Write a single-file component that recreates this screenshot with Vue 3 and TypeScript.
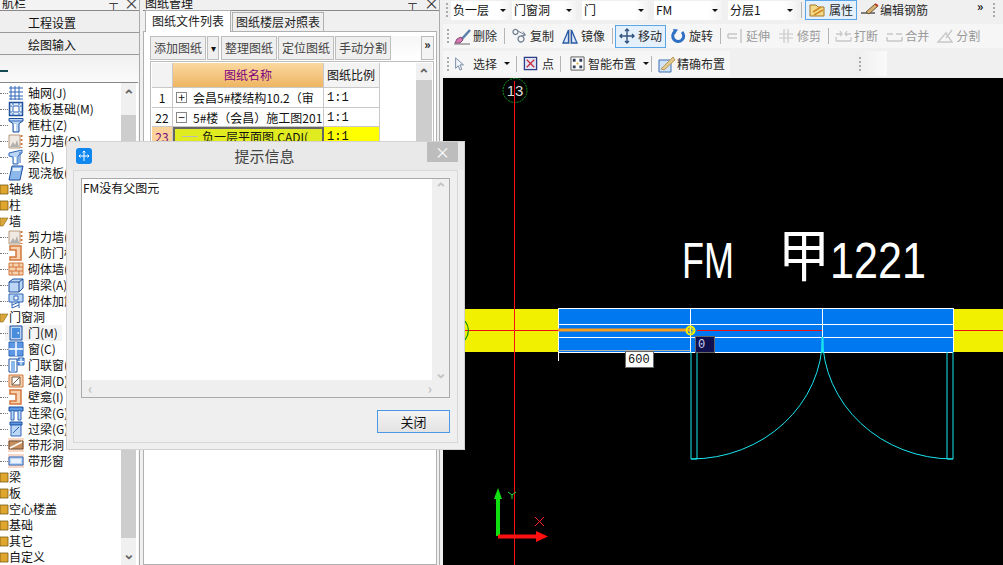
<script setup lang="ts">
import { h } from 'vue'

type Part = { d: string; s?: string; f?: string; w?: number; o?: number }
const B = '#2f66b8'
const LB = '#bcd6f5'
const O = '#d2763a'
const LO = '#f7d2b0'

const icons: Record<string, Part[]> = {
  grid: [{ d: 'M1 3H15M1 7H15M1 11H15M1 14H15M3 1V15M7 1V15M11 1V15', s: B }],
  raft: [
    { d: 'M1.5 1.5H14.5V14.5H1.5Z', s: '#1d4f9c', f: '#e8f0fb', w: 1.5 },
    { d: 'M5 5H11V11H5Z', s: B, f: '#fff' },
    { d: 'M1 5H4M1 11H4M12 5H15M12 11H15M5 1V4M11 1V4M5 12V15M11 12V15', s: B }
  ],
  col: [
    { d: 'M1 1.5H15V4L11 6.5V15H5V6.5L1 4Z', s: '#1d4f9c', f: LB },
    { d: 'M1 4H15', s: B },
    { d: 'M7 7V14', s: '#fff', w: 2 }
  ],
  shear: [
    { d: 'M1 2H12V15H1Z', s: '#b59a7c', f: '#efe9e2' },
    { d: 'M2 14L5 9L7 12L9 7L11 14Z', f: '#9c9c9c', o: 0.75 },
    { d: 'M13.5 2V4M13.5 6V8M13.5 10V12M13.5 14V15', s: O, w: 2 }
  ],
  beam: [
    { d: 'M1 4L14 1V4L10 7V15H5V8L1 7Z', s: B, f: LB },
    { d: 'M7 8V14', s: '#fff', w: 2 },
    { d: 'M12 3V14', s: B }
  ],
  slab: [{ d: 'M4 1H15L12 15H1Z', s: '#1d4f9c', f: '#8db8ec' }, { d: 'M5 3H13L12 6H4.5Z', f: '#e3effc' }],
  rf: [{ d: 'M2 1H13V15H2V12H8V5H2Z', s: O, f: LO, w: 1.5 }],
  brick: [
    { d: 'M1 2H15V14H1Z', s: O, f: LO },
    { d: 'M1 6H15M1 10H15M5 2V6M11 2V6M8 6V10M4 10V14M11 10V14', s: O }
  ],
  hidden: [
    { d: 'M1 5L5 2H15V11L11 15H1Z', s: '#1d4f9c', f: LB },
    { d: 'M1 5H11V15M11 5L15 2', s: '#1d4f9c' }
  ],
  rebar: [
    { d: 'M1 1H15V9H1Z', s: B, f: LB },
    { d: 'M4 9V15M11 9V15M4 12L11 9M4 15L11 12', s: B },
    { d: 'M6 3H10V7H6Z', f: '#fff', s: B }
  ],
  door: [
    { d: 'M2 1H14V15H2Z', s: '#1d4f9c', f: LB },
    { d: 'M4 3H12V13H4Z', f: '#4a8ddd' },
    { d: 'M9.5 8H11', s: '#fff', w: 1.5 }
  ],
  win: [
    { d: 'M1 1H15V15H1Z', s: B, f: '#5b97e2' },
    { d: 'M8 1V15M1 8H15', s: '#fff', w: 1.5 }
  ],
  doorwin: [
    { d: 'M1 2H9V15H1Z', s: '#1d4f9c', f: '#fff' },
    { d: 'M3 4H7V15H3Z', f: '#8db8ec' },
    { d: 'M10 1H16V8H10Z', s: B, f: '#6ea3e6' },
    { d: 'M13 1V8M10 4.5H16', s: '#fff' }
  ],
  hole: [
    { d: 'M1 2H15V14H1Z', s: O, f: LO },
    { d: 'M4 4H12V12H4Z', f: '#fff', s: '#7a5a40' },
    { d: 'M4 12L12 4', s: '#7a5a40' }
  ],
  lintel: [
    { d: 'M1 2H15V6H1Z', s: '#1d4f9c', f: '#5b97e2' },
    { d: 'M3 6V15H6V6M10 6V15H13V6', s: B, f: LB }
  ],
  over: [
    { d: 'M2 1H14V4H2Z', s: '#1d4f9c', f: '#5b97e2' },
    { d: 'M3 4H13V15H3Z', s: B, f: LB },
    { d: 'M5 12L11 6', s: B }
  ],
  band: [
    { d: 'M0 1H16V15H0Z', f: '#f6d9c8' },
    { d: 'M1 4H15V12H1Z', s: '#6b4a2c', f: '#c78f5e' },
    { d: 'M2 11L14 5', s: '#fff', w: 1.5 }
  ],
  bandw: [
    { d: 'M0 1H16V15H0Z', f: '#f6d9c8' },
    { d: 'M1 4H15V12H1Z', s: B, f: LB },
    { d: 'M3 6H13V10H3Z', f: '#e9f2fd' }
  ],
  brush: [
    { d: 'M7 12L16 2', s: '#5a7ea8', w: 2.5 },
    { d: 'M3 11L7 9L9 12L6 15H1Z', f: '#d878b0', s: '#8a4878' },
    { d: 'M0 16H16', s: '#6a6a6a' }
  ],
  copy: [
    { d: 'M2 4A2.5 2.5 0 1 0 2 3.9ZM7 11A3 3 0 1 0 7 10.9Z', s: '#6f7f92', w: 1.3 },
    { d: 'M7 3L14 7M12 3.5L14.5 7.2L10 8', s: '#6f7f92' }
  ],
  mirror: [
    { d: 'M6.5 2V15H1Z', s: '#2a5aa5', f: '#dbe8f8', w: 1.3 },
    { d: 'M9.5 2V15H15Z', s: '#2a5aa5', f: '#dbe8f8', w: 1.3 },
    { d: 'M8 1V16', s: '#7a8aa0' }
  ],
  move: [{ d: 'M8 1V15M1 8H15M6 3L8 1L10 3M6 13L8 15L10 13M3 6L1 8L3 10M13 6L15 8L13 10', s: '#33557f', w: 1.4 }],
  rotate: [
    { d: 'M5 3.5A5.5 5.500 0 1 0 12 4', s: '#2f6fc4', w: 3 },
    { d: 'M3 1L8 1.5L5 6Z', f: '#2f6fc4' }
  ],
  extend: [{ d: 'M1 6H10M1 10H10M1 6V10M14 1V15', s: '#c8c8c8', w: 1.5 }],
  trim: [{ d: 'M1 6H15M1 10H15M6 1V15M10 1V15', s: '#c8c8c8', w: 1.2 }],
  brk: [{ d: 'M1 6H7M10 6H16M1 13H16M1 9V13M16 9V13M5 3L7 6L5 8M12 3L10 6L12 8', s: '#c8c8c8', w: 1.3 }],
  merge: [{ d: 'M1 6H7M10 6H16M1 13H16M1 9V13M16 9V13', s: '#c8c8c8', w: 1.5 }],
  split: [{ d: 'M1 14H15L9 5L1 14ZM9 10L15 2', s: '#c8c8c8', w: 1.4 }],
  arrow: [{ d: 'M3 1V13L6 10L8 15L10 14L8 9H12Z', f: '#f2f5fa', s: '#6c7f99' }],
  point: [
    { d: 'M1.5 1.5H14.5V14.5H1.5Z', s: '#2f3f88', f: '#dfe4f4', w: 1.4 },
    { d: 'M4 4L12 12M12 4L4 12', s: '#c8283a', w: 1.4 }
  ],
  smart: [
    { d: 'M1 1H15V15H1Z', s: '#555', f: '#fff' },
    { d: 'M3 3H6V6H3ZM10 3H13V6H10ZM3 10H6V13H3ZM10 10H13V13H10Z', f: '#33415c' },
    { d: 'M7 7H9V9H7Z', f: '#d9a533' }
  ],
  exact: [
    { d: 'M1 4H13V16H1Z', s: '#3d6fb0', f: '#cfe2f8' },
    { d: 'M3 13L15 1L17 4L6 14Z', f: '#e2c98e', s: '#b89858' }
  ],
  prop: [
    { d: 'M1 3H7L9 5H15V14H1Z', f: '#f4d98a', s: '#a8762a' },
    { d: 'M4 10L12 5M5 13L14 8', s: '#d18a22', w: 1.5 }
  ],
  rebarEdit: [
    { d: 'M0 11H14', s: '#333', w: 1.2 },
    { d: 'M5 10L14 2L17 4L8 12Z', f: '#d8b070', s: '#6a5a3a' },
    { d: 'M14 2L17 4', s: '#c0392b', w: 2 }
  ]
}

const Icon = (props: { n: string; size?: number }) => {
  const sz = props.size ?? 16
  return h(
    'svg',
    { width: sz, height: sz, viewBox: '0 0 16 16', style: 'flex:none;display:block;overflow:visible' },
    (icons[props.n] ?? []).map((p) =>
      h('path', {
        d: p.d,
        fill: p.f ?? 'none',
        stroke: p.s ?? 'none',
        'stroke-width': p.w ?? 1,
        opacity: p.o ?? 1
      })
    )
  )
}
Icon.props = ['n', 'size']

type TreeRow = { label: string; icon?: string; open?: boolean; active?: boolean }
const tree: TreeRow[] = [
  { label: '轴网(J)', icon: 'grid' },
  { label: '筏板基础(M)', icon: 'raft' },
  { label: '框柱(Z)', icon: 'col' },
  { label: '剪力墙(Q)', icon: 'shear' },
  { label: '梁(L)', icon: 'beam' },
  { label: '现浇板(B)', icon: 'slab' },
  { label: '轴线' },
  { label: '柱' },
  { label: '墙', open: true },
  { label: '剪力墙(Q)', icon: 'shear' },
  { label: '人防门框墙(RF)', icon: 'rf' },
  { label: '砌体墙(Q)', icon: 'brick' },
  { label: '暗梁(A)', icon: 'hidden' },
  { label: '砌体加筋(Y)', icon: 'rebar' },
  { label: '门窗洞', open: true },
  { label: '门(M)', icon: 'door', active: true },
  { label: '窗(C)', icon: 'win' },
  { label: '门联窗(A)', icon: 'doorwin' },
  { label: '墙洞(D)', icon: 'hole' },
  { label: '壁龛(I)', icon: 'rf' },
  { label: '连梁(G)', icon: 'lintel' },
  { label: '过梁(G)', icon: 'over' },
  { label: '带形洞', icon: 'band' },
  { label: '带形窗', icon: 'bandw' },
  { label: '梁' },
  { label: '板' },
  { label: '空心楼盖' },
  { label: '基础' },
  { label: '其它' },
  { label: '自定义' }
]

const combos = [
  { label: '负一层', cls: 'c1' },
  { label: '门窗洞', cls: 'c2a' },
  { label: '门', cls: 'c2' },
  { label: 'FM', cls: 'c2b' },
  { label: '分层1', cls: 'c3' }
]

const tools = [
  { n: 'brush', t: '删除', sep: true },
  { n: 'copy', t: '复制' },
  { n: 'mirror', t: '镜像', sep: true },
  { n: 'move', t: '移动', active: true },
  { n: 'rotate', t: '旋转', sep: true },
  { n: 'extend', t: '延伸', off: true },
  { n: 'trim', t: '修剪', off: true, sep: true },
  { n: 'brk', t: '打断', off: true },
  { n: 'merge', t: '合并', off: true },
  { n: 'split', t: '分割', off: true }
]
</script>

<template>
  <div class="app">
    <aside class="nav">
      <div class="phead">
        <span>航栏</span>
        <span class="pin">⊥</span>
        <span class="x">×</span>
      </div>
      <div class="navbtn">工程设置</div>
      <div class="navbtn">绘图输入</div>
      <div class="navgap"><i class="mark"></i></div>
      <div class="treebox">
        <div class="tree">
          <div v-for="(r, i) in tree" :key="i" class="trow" :class="{ leaf: r.icon, act: r.active }">
            <template v-if="r.icon">
              <i class="dots"></i>
              <Icon :n="r.icon" />
            </template>
            <svg v-else class="folder" width="9" height="12" viewBox="0 0 9 12">
              <path v-if="r.open" d="M0 3H8L3 11H0Z" fill="#d9a63a" stroke="#8a6a20" stroke-width=".6" />
              <path v-else d="M0 2H8V11H0Z" fill="#e0a52c" stroke="#7a5a18" stroke-width=".8" />
            </svg>
            <span class="tlabel">{{ r.label }}</span>
          </div>
        </div>
        <div class="vscroll">
          <span class="sarrow">⌃</span>
          <div class="thumb"></div>
          <span class="sarrow down">⌄</span>
        </div>
      </div>
    </aside>

    <section class="panel">
      <div class="phead phead2">
        <span>图纸管理</span>
        <span class="pin">⊥</span>
        <span class="x">×</span>
      </div>
      <div class="tabs">
        <div class="tab on">图纸文件列表</div>
        <div class="tab">图纸楼层对照表</div>
      </div>
      <div class="tabbody">
        <div class="dtools">
          <div class="dbtn">添加图纸</div>
          <div class="dbtn drop">▾</div>
          <div class="dbtn">整理图纸</div>
          <div class="dbtn">定位图纸</div>
          <div class="dbtn">手动分割</div>
          <div class="dmore">»</div>
        </div>
        <div class="tablebox">
          <div class="grid">
            <div class="cell rh"></div>
            <div class="cell hname">图纸名称</div>
            <div class="cell hratio">图纸比例</div>

            <div class="cell rh r">1</div>
            <div class="cell name"><i class="pm">+</i>会昌5#楼结构10.2（审</div>
            <div class="cell ratio">1:1</div>

            <div class="cell rh r">22</div>
            <div class="cell name"><i class="pm">−</i>5#楼（会昌）施工图201</div>
            <div class="cell ratio">1:1</div>

            <div class="cell rh r sel">23</div>
            <div class="cell name cur"><i class="line"></i>负一层平面图.CADI(</div>
            <div class="cell ratio yl">1:1</div>
          </div>
          <div class="tscroll">
            <span class="sarrow">⌃</span>
            <div class="tthumb"></div>
          </div>
        </div>
      </div>
    </section>

    <main class="work">
      <div class="row1">
        <i class="grip"></i>
        <div v-for="c in combos" :key="c.cls + c.label" class="combo" :class="c.cls">
          <span>{{ c.label }}</span><b class="caret"></b>
        </div>
        <i class="vsep"></i>
        <div class="tool active prop"><Icon n="prop" /><span>属性</span></div>
        <div class="tool edit"><Icon n="rebarEdit" /><span>编辑钢筋</span></div>
        <span class="more">»</span>
        <i class="grip g2"></i>
      </div>
      <div class="row2">
        <i class="grip"></i>
        <template v-for="t in tools" :key="t.t">
          <div class="tool" :class="{ active: t.active, off: t.off }"><Icon :n="t.n" /><span>{{ t.t }}</span></div>
          <i v-if="t.sep" class="vsep"></i>
        </template>
      </div>
      <div class="row3wrap">
        <div class="row3">
          <i class="grip"></i>
          <div class="tool"><Icon n="arrow" :size="14" /><span class="lbl-sel">选择</span><b class="caret"></b></div>
          <i class="vsep"></i>
          <div class="tool"><Icon n="point" :size="15" /><span class="lbl-pt">点</span></div>
          <i class="vsep"></i>
          <div class="tool smart"><Icon n="smart" :size="15" /><span>智能布置</span><b class="caret"></b></div>
          <i class="vsep"></i>
          <div class="tool"><Icon n="exact" /><span>精确布置</span></div>
        </div>
        <div class="row3b"><i class="grip"></i></div>
      </div>
      <div class="canvas">
        <svg class="cad" width="560" height="488" viewBox="443 77 560 488">
          <rect x="443" y="308" width="115" height="43" fill="#f0f000" />
          <rect x="953" y="308" width="50" height="43" fill="#f0f000" />
          <rect x="558" y="308" width="395" height="43" fill="#0078f0" />
          <path d="M443 329.5H558M953 329.5H1003" stroke="#f01010" />
          <path d="M558 307.5H953M558 323.5H953M558 336.5H953M558 351.5H953" stroke="#fff" />
          <path d="M558.5 307V360M690.5 307V351M822.5 307V336M953.5 307V351" stroke="#fff" />
          <path d="M697 329.5H822" stroke="#f01010" />
          <path d="M558 329H690" stroke="#ff9c1a" stroke-width="3" />
          <path d="M558 349.500H690" stroke="#b0b0b0" />
          <path d="M465 320Q472 329 465 339" stroke="#0a8a10" stroke-width="1.200" fill="none" />
          <circle cx="515" cy="89.5" r="12" fill="none" stroke="#0da01e" stroke-dasharray="2 1" />
          <text x="515" y="95" text-anchor="middle" class="axis">13</text>
          <path d="M514.500 80V565" stroke="#ff1010" />
          <g fill="none" stroke="#19e6f0">
            <path d="M691 351V458H697V351" />
            <path d="M953 351V458H947V351" />
            <path d="M822.5 336A131.500 122 0 0 1 691 458" />
            <path d="M822.500 336A130.500 122 0 0 0 953 458" />
            <path d="M822.5 336V352" stroke-width="2" />
          </g>
          <text x="682" y="277" class="big" textLength="52" lengthAdjust="spacingAndGlyphs">FM</text>
          <text x="778" y="275" class="cjk" textLength="52" lengthAdjust="spacingAndGlyphs">甲</text>
          <text x="830" y="277" class="big" textLength="96" lengthAdjust="spacingAndGlyphs">1221</text>
          <circle cx="690.5" cy="329.5" r="4" fill="none" stroke="#f4f000" stroke-width="2" />
          <rect x="690" y="328" width="3" height="3" fill="none" stroke="#f4f000" />
          <rect x="625.5" y="350.5" width="28" height="16" fill="#fff" stroke="#666" />
          <text x="628" y="362" class="inp dk">600</text>
          <rect x="695.5" y="335.5" width="19" height="16" fill="#10104f" stroke="#666" />
          <text x="698" y="347" class="inp lt">0</text>
          <path d="M498 535V495" stroke="#10e010" stroke-width="4" />
          <path d="M494 498L498 487L502 498Z" fill="#10e010" />
          <path d="M498 535.5H538" stroke="#ff1010" stroke-width="4" />
          <path d="M536 530L548 535.5L536 541Z" fill="#ff1010" />
          <path d="M508 491L512 494L516 491M512 494V498" stroke="#20e030" fill="none" />
          <path d="M535 516L544 525M544 516L535 525" stroke="#ff2020" fill="none" />
        </svg>
      </div>
    </main>

    <div class="dialog">
      <header class="dhead">
        <span class="dlogo">
          <svg width="16" height="16" viewBox="0 0 16 16">
            <rect width="16" height="16" rx="3" fill="#1188f0" />
            <path d="M8 3V13M3 8H13M6.5 4.5L8 3L9.500 4.500M4.500 6.500L3 8L4.500 9.500M11.500 6.500L13 8L11.500 9.500" stroke="#fff" fill="none" />
          </svg>
        </span>
        <span class="dtitle">提示信息</span>
        <span class="dclose">×</span>
      </header>
      <div class="dinner">
        <div class="textbox">
          <div class="tbody">
            <div class="msg">FM没有父图元</div>
            <div class="dvs"><span class="sa">⌃</span><span class="sa">⌄</span></div>
          </div>
          <div class="dhs"><span class="sa">‹</span><span class="sa">›</span></div>
        </div>
        <div class="dfoot"><button class="closebtn" type="button">关闭</button></div>
      </div>
    </div>
  </div>
</template>

<style>
html,
body {
  margin: 0;
  background: #000;
}
</style>

<style scoped>
.app {
  position: relative;
  display: flex;
  width: 1003px;
  height: 565px;
  overflow: hidden;
  background: #f0f0f0;
  color: #111;
  font: 12px/16px "Noto Sans CJK SC", "Liberation Sans", sans-serif;
}
i {
  font-style: normal;
}
.nav {
  flex: none;
  width: 139px;
  display: flex;
  flex-direction: column;
  background: #f3f3f3;
  border-right: 1px solid #aaa;
}
.phead {
  flex: none;
  display: flex;
  height: 10px;
  line-height: 5px;
  padding-left: 2px;
  overflow: hidden;
  border-bottom: 1px solid #888;
  white-space: nowrap;
}
.pin {
  margin-left: auto;
  font-size: 11px;
  transform: rotate(180deg);
}
.x {
  margin: 0 0 0 5px;
  font-size: 15px;
  color: #333;
}
.navbtn {
  flex: none;
  height: 21px;
  line-height: 23px;
  padding-left: 28px;
  font-size: 12px;
  overflow: hidden;
  background: #efefef;
  border-bottom: 1px solid #9a9a9a;
}
.navgap {
  flex: none;
  height: 27px;
  position: relative;
  background: linear-gradient(#f0f0f0, #fafafa);
}
.mark {
  position: absolute;
  left: 0;
  top: 15px;
  width: 8px;
  height: 2px;
  background: #164a52;
}
.treebox {
  flex: 1;
  min-height: 0;
  display: flex;
  background: #fff;
  border-top: 1px solid #888;
  margin-right: 1px;
}
.tree {
  flex: 1;
  min-width: 0;
  padding-top: 2px;
  overflow: hidden;
}
.trow {
  display: flex;
  align-items: center;
  height: 16px;
  white-space: nowrap;
}
.folder {
  flex: none;
}
.leaf .tlabel {
  margin-left: 4px;
}
.dots {
  flex: none;
  width: 8px;
  border-top: 1px dotted #777;
}
.act {
  background: linear-gradient(#f3f3f3, #f3f3f3) 5px 0 / 57px 16px no-repeat;
}
.vscroll {
  flex: none;
  width: 15px;
  margin-right: 2px;
  display: flex;
  flex-direction: column;
  background: #f0f0f0;
}
.sarrow {
  flex: none;
  height: 32px;
  font-size: 14px;
  line-height: 22px;
  text-align: center;
  color: #666;
  font-weight: 700;
}
.sarrow.down {
  height: 27px;
  line-height: 30px;
}
.thumb {
  flex: 1;
  background: #cdcdcd;
}
.panel {
  flex: none;
  width: 300px;
  margin-right: 3px;
  display: flex;
  flex-direction: column;
  background: #f0f0f0;
  border-right: 1px solid #aaa;
  padding-left: 3px;
  box-sizing: border-box;
}
.phead2 {
  padding-left: 2px;
}
.phead2 .x {
  margin-left: 6px;
}
.tabs {
  flex: none;
  display: flex;
  align-items: flex-end;
  height: 20px;
  padding-left: 2px;
  position: relative;
  z-index: 1;
}
.tab {
  height: 18px;
  line-height: 18px;
  padding: 0 3px;
  background: #efefef;
  border: 1px solid #b0b0b0;
  border-bottom: 0;
  color: #222;
}
.tab.on {
  height: 21px;
  line-height: 20px;
  padding: 0 6px;
  margin-right: 1px;
  background: #fff;
  margin-bottom: -1px;
}
.tabbody {
  flex: 1;
  display: flex;
  flex-direction: column;
  background: #fff;
  border: 1px solid #b0b0b0;
  margin-right: 2px;
  padding: 4px 2px 0 6px;
}
.dtools {
  flex: none;
  display: flex;
  gap: 1px;
  height: 24px;
  background: linear-gradient(#f6f6f6, #fff);
}
.dbtn {
  width: 54px;
  height: 22px;
  line-height: 22px;
  text-align: center;
  color: #444;
  background: #efefef;
  border: 1px solid #bdbdbd;
}
.drop {
  width: 10px;
  font-size: 10px;
  color: #111;
  margin-right: 1px;
}
.dmore {
  margin-left: auto;
  width: 11px;
  height: 22px;
  line-height: 14px;
  text-align: center;
  font-weight: 700;
  background: #f3f3f3;
  border: 1px solid #bbb;
}
.tablebox {
  flex: none;
  height: 110px;
  margin-top: 1px;
  display: flex;
  justify-content: space-between;
  border: 1px solid #bdbdbd;
  padding: 1px 0 0 1px;
}
.grid {
  display: grid;
  grid-template-columns: 21px 151px 56px;
  grid-template-rows: 25px 20px 19px 24px;
  align-self: flex-start;
}
.cell {
  box-sizing: border-box;
  border-right: 1px solid #c8c8c8;
  border-bottom: 1px solid #c8c8c8;
  line-height: 19px;
  white-space: nowrap;
  overflow: hidden;
}
.rh {
  background: #f3f3f3;
}
.r {
  text-align: center;
  background: #fff;
}
.sel {
  background: #fbd29a;
  color: #7a0f7a;
}
.hname {
  text-align: center;
  line-height: 24px;
  font-size: 12px;
  color: #800080;
  background: linear-gradient(#fbd9a0, #eeb562);
}
.hratio {
  line-height: 24px;
  padding-left: 3px;
  background: #f3f3f3;
}
.name {
  display: flex;
  align-items: center;
  padding-left: 2px;
}
.pm {
  flex: none;
  box-sizing: border-box;
  width: 11px;
  height: 11px;
  margin: 0 6px 0 1px;
  border: 1px solid #888;
  line-height: 8px;
  text-align: center;
  font-size: 12px;
}
.ratio {
  padding-left: 3px;
  line-height: 21px;
  font-family: "Liberation Mono", monospace;
}
.cur {
  align-items: flex-start;
  background: #e0ec20;
  border: 2px solid #666;
  padding-left: 7px;
  line-height: 15px;
}
.line {
  flex: none;
  width: 16px;
  margin: 7px 4px 0 0;
  border-top: 1px solid #bbb;
}
.yl {
  background: #ff0;
}
.tscroll {
  width: 16px;
  margin-right: 1px;
  display: flex;
  flex-direction: column;
  background: #f0f0f0;
}
.tscroll .sarrow {
  height: 17px;
  line-height: 20px;
}
.tthumb {
  flex: 1;
  background: #cdcdcd;
}
.work {
  flex: 1;
  min-width: 0;
  display: flex;
  flex-direction: column;
  background: #f0f0f0;
}
.grip {
  flex: none;
  width: 2px;
  height: 14px;
  margin: 0 3px 0 3px;
  background: repeating-linear-gradient(#aaa 0 2px, transparent 2px 4px);
}
.row1 {
  flex: none;
  height: 20px;
  display: flex;
  align-items: center;
  margin-bottom: 4px;
}
.combo {
  flex: none;
  display: flex;
  align-items: center;
  justify-content: space-between;
  box-sizing: border-box;
  height: 19px;
  padding: 0 4px 0 2px;
  background: linear-gradient(90deg, #fff 80%, #f3f3f3);
}
.c1 {
  width: 59px;
  margin-right: 2px;
}
.c2 {
  width: 66px;
  margin-right: 6px;
}
.c2a {
  width: 64px;
  margin-right: 6px;
}
.c2b {
  width: 68px;
  margin-right: 6px;
}
.c3 {
  width: 69px;
}
.caret {
  flex: none;
  width: 0;
  height: 0;
  margin-left: 4px;
  border: 3px solid transparent;
  border-top: 3px solid #111;
  border-bottom: 0;
}
.vsep {
  flex: none;
  width: 1px;
  height: 16px;
  margin: 0 3px 0 4px;
  background: #b5b5b5;
}
.tool {
  flex: none;
  display: flex;
  align-items: center;
  gap: 3px;
  box-sizing: border-box;
  height: 23px;
  padding: 0 3px;
  color: #2a2a2a;
  white-space: nowrap;
}
.tool.active {
  border: 1px solid #5aa5e8;
  background: #e4f0fb;
}
.tool.off {
  color: #9a9a9a;
}
.tool.prop {
  height: 20px;
  padding: 0 3px;
  gap: 4px;
}
.edit {
  margin-left: 1px;
}
.more {
  margin-left: 46px;
  font-weight: 700;
  width: 12px;
  line-height: 12px;
  align-self: flex-start;
}
.g2 {
  margin-left: auto;
  margin-right: 8px;
}
.row2 {
  flex: none;
  height: 24px;
  display: flex;
  align-items: center;
  background: #f6f6f6;
  padding-left: 1px;
  margin-bottom: 3px;
}
.row2 .grip {
  margin-right: 2px;
}
.row2 .vsep {
  margin: 0 3px 0 2px;
}
.row2 .tool {
  margin-right: 2px;
}
.row2 .tool.active {
  margin-left: -1px;
  margin-right: 1px;
}
.row3wrap {
  flex: none;
  height: 25px;
  display: flex;
  margin-bottom: 2px;
}
.row3 {
  display: flex;
  align-items: center;
  width: 287px;
  padding-left: 1px;
  background: #f6f6f6;
  box-sizing: border-box;
}
.row3 .grip {
  margin-right: 2px;
}
.row3 .tool {
  padding: 0 2px;
}
.row3 .vsep {
  margin: 0 4px;
}
.row3 .tool.smart {
  margin-left: 3px;
  margin-right: -4px;
}
.lbl-sel {
  margin-left: 3px;
}
.lbl-pt {
  margin-left: 1px;
}
.row3b {
  margin-left: 126px;
  width: 31px;
  display: flex;
  align-items: center;
  background: linear-gradient(90deg, #eee, #fafafa);
}
.canvas {
  flex: 1;
  min-height: 0;
  background: #000;
}
.cad {
  display: block;
}
.axis {
  fill: #ddd;
  font: 15px "Liberation Sans", sans-serif;
}
.big {
  fill: #fff;
  font: 50px "Liberation Sans", sans-serif;
}
.cjk {
  fill: #fff;
  font: 56px "Noto Sans CJK SC", sans-serif;
}
.inp {
  font: 12px "Liberation Mono", monospace;
}
.dk {
  fill: #111;
}
.lt {
  fill: #cfd0ee;
}
.dialog {
  position: absolute;
  left: 66px;
  top: 141px;
  box-sizing: border-box;
  width: 399px;
  height: 309px;
  display: flex;
  flex-direction: column;
  background: #efefef;
  border: 1px solid #d2d2d2;
}
.dhead {
  flex: none;
  position: relative;
  height: 28px;
  display: flex;
  align-items: center;
  justify-content: center;
  background: #e9e9e9;
}
.dlogo {
  position: absolute;
  left: 9px;
  top: 6px;
  height: 16px;
}
.dtitle {
  font-size: 15px;
  color: #444;
  margin-left: -2px;
}
.dclose {
  position: absolute;
  right: 6px;
  top: 0;
  width: 31px;
  height: 20px;
  line-height: 19px;
  text-align: center;
  font-size: 15px;
  color: #fff;
  background: #bdbdbd;
}
.dinner {
  flex: 1;
  min-height: 0;
  display: flex;
  flex-direction: column;
  margin: 0 6px 6px;
  padding: 7px 7px 0;
  border: 1px solid #d8d8d8;
}
.textbox {
  flex: none;
  box-sizing: border-box;
  height: 220px;
  display: flex;
  flex-direction: column;
  border: 1px solid #aaa;
  background: #efefef;
}
.tbody {
  flex: 1;
  min-height: 0;
  display: flex;
}
.msg {
  flex: 1;
  padding: 1px 1px;
  background: #fff;
  font-size: 12px;
  line-height: 15px;
}
.dvs {
  flex: none;
  width: 17px;
  display: flex;
  flex-direction: column;
  justify-content: space-between;
  align-items: center;
}
.dhs {
  flex: none;
  height: 17px;
  padding: 0 17px 0 6px;
  display: flex;
  justify-content: space-between;
}
.sa {
  color: #c2c2c2;
  font-weight: 700;
  font-size: 14px;
  line-height: 16px;
}
.dfoot {
  flex: 1;
  display: flex;
  justify-content: flex-end;
  align-items: flex-start;
  padding-top: 12px;
}
.closebtn {
  box-sizing: border-box;
  width: 73px;
  height: 23px;
  padding: 0;
  font: 13px/19px "Noto Sans CJK SC", sans-serif;
  color: #111;
  background: linear-gradient(#f3f3f3, #e3e3e3);
  border: 1px solid #4a98e6;
}
</style>
